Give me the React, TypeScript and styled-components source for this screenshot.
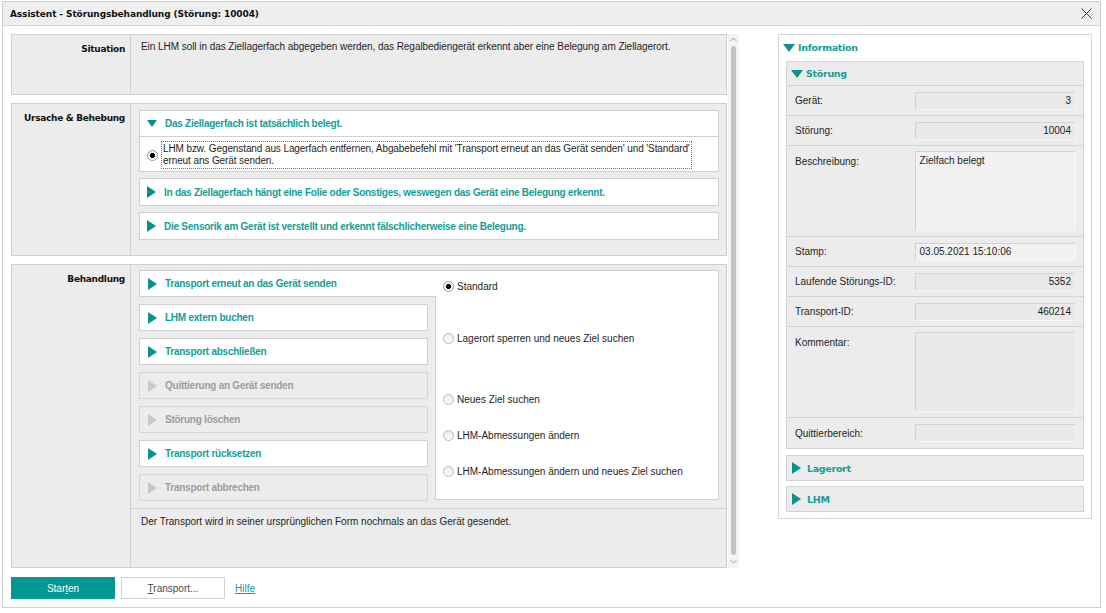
import React from "react";
import styled, { createGlobalStyle, css } from "styled-components";

const teal = "#139e98";
const tealDark = "#0b928d";
const line = "#d0d0d0";
const panelBg = "#ececec";

const GlobalStyle = createGlobalStyle`
  html, body {
    margin: 0;
    padding: 0;
    background: #ffffff;
  }
  body {
    font-family: "Liberation Sans", Arial, sans-serif;
    font-size: 10px;
    color: #1e1e1e;
  }
  * {
    box-sizing: border-box;
  }
`;

const Window = styled.div`
  margin: 1px 0 0 2px;
  width: 1099px;
  height: 607px;
  border: 1px solid #cfcfcf;
  display: flex;
  flex-direction: column;
  background: #ffffff;
`;

const TitleBar = styled.div`
  height: 24px;
  background: #efefef;
  border-bottom: 1px solid #d4d4d4;
  display: flex;
  align-items: center;
  justify-content: space-between;
  padding: 0 8px 0 7px;
`;

const Title = styled.div`
  font-family: "DejaVu Sans", Verdana, sans-serif;
  font-weight: bold;
  font-size: 9px;
  letter-spacing: -0.1px;
  color: #111;
`;

const CloseButton = styled.div`
  width: 12px;
  height: 12px;
  display: flex;
  align-items: center;
  justify-content: center;
`;

const Body = styled.div`
  flex: 1;
  display: flex;
  gap: 39px;
  padding: 8px 0 0 8px;
`;

const LeftColumn = styled.div`
  width: 728px;
  display: flex;
  flex-direction: column;
`;

const ScrollArea = styled.div`
  height: 534px;
  display: flex;
`;

const Sections = styled.div`
  width: 716px;
  display: flex;
  flex-direction: column;
  gap: 8px;
`;

const Section = styled.div<{ $grow?: boolean; $height?: number }>`
  display: flex;
  border: 1px solid ${line};
  background: ${panelBg};
  ${(p) => p.$height && css`height: ${p.$height}px;`}
  ${(p) => p.$grow && css`flex: 1;`}
`;

const SectionLabel = styled.div`
  width: 119px;
  flex-shrink: 0;
  border-right: 1px solid ${line};
  text-align: right;
  padding: 9px 5px 0 0;
  font-family: "DejaVu Sans", Verdana, sans-serif;
  font-weight: bold;
  font-size: 9px;
  letter-spacing: -0.3px;
  color: #111;
`;

const SectionContent = styled.div<{ $pad?: string }>`
  flex: 1;
  min-width: 0;
  display: flex;
  flex-direction: column;
  padding: ${(p) => p.$pad || "0"};
`;

const SituationText = styled.div`
  padding: 6px 10px;
  line-height: 12px;
  letter-spacing: -0.05px;
`;

const ItemList = styled.div`
  display: flex;
  flex-direction: column;
  gap: 6px;
`;

const Item = styled.div`
  background: #fff;
  border: 1px solid ${line};
`;

const ItemHeader = styled.div<{ $open?: boolean }>`
  height: 26px;
  display: flex;
  align-items: center;
  padding-left: 7px;
  gap: 8px;
  ${(p) => p.$open && css`border-bottom: 1px solid ${line};`}
`;

const HeaderText = styled.span<{ $disabled?: boolean }>`
  font-weight: bold;
  font-size: 10px;
  letter-spacing: -0.25px;
  color: ${(p) => (p.$disabled ? "#9c9c9c" : teal)};
`;

const GroupTitle = styled.span`
  font-family: "DejaVu Sans", Verdana, sans-serif;
  font-weight: bold;
  font-size: 9.5px;
  letter-spacing: -0.3px;
  color: ${teal};
`;

const TriangleRight = styled.span<{ $disabled?: boolean }>`
  width: 0;
  height: 0;
  border-top: 6px solid transparent;
  border-bottom: 6px solid transparent;
  border-left: 9px solid ${(p) => (p.$disabled ? "#c9c9c9" : tealDark)};
`;

const TriangleDown = styled.span<{ $size?: number }>`
  width: 0;
  height: 0;
  border-left: ${(p) => (p.$size || 10) / 2}px solid transparent;
  border-right: ${(p) => (p.$size || 10) / 2}px solid transparent;
  border-top: ${(p) => Math.round(((p.$size || 10) * 7) / 10)}px solid ${tealDark};
`;

const OptionRow = styled.div`
  display: flex;
  align-items: center;
  padding: 4px 26px 2px 7px;
  gap: 3px;
`;

const FocusText = styled.div`
  flex: 1;
  min-width: 0;
  overflow: hidden;
  border: 1px dotted #777;
  padding: 1px;
  line-height: 12px;
  white-space: nowrap;
  letter-spacing: -0.1px;
`;

const Radio = styled.span<{ $checked?: boolean }>`
  width: 11px;
  height: 11px;
  flex-shrink: 0;
  border-radius: 50%;
  border: 1px solid ${(p) => (p.$checked ? "#9a9a9a" : "#b9b9b9")};
  background: ${(p) =>
    p.$checked
      ? "radial-gradient(circle, #000 0 2.3px, #f7f7f7 2.8px)"
      : "linear-gradient(#ededed, #fafafa)"};
`;

const TabArea = styled.div`
  display: flex;
  padding: 5px 7px 0 8px;
`;

const ActionList = styled.div`
  width: 289px;
  display: flex;
  flex-direction: column;
  gap: 7px;
`;

const ActionButton = styled.div<{ $selected?: boolean; $disabled?: boolean }>`
  position: relative;
  height: 27px;
  display: flex;
  align-items: center;
  gap: 8px;
  padding-left: 8px;
  background: ${(p) => (p.$disabled ? panelBg : "#fff")};
  border: 1px solid ${(p) => (p.$disabled ? "#d6d6d6" : line)};
  ${(p) =>
    p.$selected &&
    css`
      margin-right: -8px;
      border-right: none;
      z-index: 1;
    `}
`;

const OptionPanel = styled.div`
  flex: 1;
  margin-left: 7px;
  height: 230px;
  background: #fff;
  border: 1px solid ${line};
  display: flex;
  flex-direction: column;
  padding: 8px 0 0 7px;
`;

const RadioOption = styled.div<{ $top: number }>`
  display: flex;
  align-items: center;
  gap: 3px;
  height: 14px;
  margin-top: ${(p) => p.$top}px;
`;

const Description = styled.div`
  margin-top: 7px;
  flex: 1;
  border-top: 1px solid ${line};
  padding: 7px 10px;
`;

const Scrollbar = styled.div`
  width: 12px;
  margin-left: 1px;
  background: #f4f4f4;
  display: flex;
  flex-direction: column;
  align-items: center;
  padding: 3px 0 4px;
`;

const Thumb = styled.div`
  flex: 1;
  width: 5px;
  margin: 4px 0;
  border-radius: 3px;
  background: #c3c3c3;
`;

const Footer = styled.div`
  display: flex;
  align-items: center;
  gap: 6px;
  margin-top: 9px;
`;

const Button = styled.div<{ $primary?: boolean }>`
  width: 104px;
  height: 22px;
  display: flex;
  align-items: center;
  justify-content: center;
  font-size: 10px;
  color: ${(p) => (p.$primary ? "#fff" : "#4a4a4a")};
  background: ${(p) => (p.$primary ? "#009893" : "#fff")};
  border: 1px solid ${(p) => (p.$primary ? "#009893" : "#d2d2d2")};
  u {
    text-decoration-thickness: 1px;
  }
`;

const Link = styled.a`
  margin-left: 4px;
  color: ${teal};
  text-decoration: underline;
  font-size: 10px;
`;

/* right-hand info panel */

const InfoPanel = styled.div`
  width: 314px;
  height: 485px;
  border: 1px solid #d8d8d8;
  padding: 0 7px;
  display: flex;
  flex-direction: column;
`;

const InfoHeader = styled.div`
  height: 26px;
  display: flex;
  align-items: center;
  gap: 3px;
  margin-left: -3px;
  padding-bottom: 1px;
`;

const InfoGroup = styled.div<{ $gap?: number }>`
  border: 1px solid #d4d4d4;
  background: ${panelBg};
  margin-top: ${(p) => p.$gap ?? 0}px;
`;

const GroupHeader = styled.div<{ $open?: boolean }>`
  height: 24px;
  display: flex;
  align-items: center;
  gap: ${(p) => (p.$open ? 3 : 6)}px;
  padding-left: ${(p) => (p.$open ? 4 : 5)}px;
  ${(p) => p.$open && css`border-bottom: 1px solid #d4d4d4;`}
`;

const FieldRow = styled.div<{ $tall?: boolean; $last?: boolean }>`
  display: flex;
  align-items: ${(p) => (p.$tall ? "flex-start" : "center")};
  height: ${(p) => (p.$tall ? 91 : 30)}px;
  padding: ${(p) => (p.$tall ? "5px 7px 0 8px" : "0 7px 0 8px")};
  ${(p) => !p.$last && css`border-bottom: 1px solid #d4d4d4;`}
`;

const FieldLabel = styled.div<{ $tall?: boolean }>`
  width: 120px;
  padding-top: ${(p) => (p.$tall ? 5 : 0)}px;
`;

const Field = styled.div<{ $tall?: boolean; $light?: boolean; $right?: boolean }>`
  width: 162px;
  height: ${(p) => (p.$tall ? 80 : 18)}px;
  border: 1px solid;
  border-color: #d3d3d3 #f7f7f7 #f7f7f7 #d3d3d3;
  background: ${(p) => (p.$light ? "#f1f1f1" : "#e9e9e9")};
  display: flex;
  align-items: ${(p) => (p.$tall ? "flex-start" : "center")};
  justify-content: ${(p) => (p.$right ? "flex-end" : "flex-start")};
  padding: ${(p) => (p.$tall ? "3px 4px" : "0 4px")};
`;

const fields: { label: string; value?: string; tall?: boolean; light?: boolean; right?: boolean }[] = [
  { label: "Gerät:", value: "3", right: true },
  { label: "Störung:", value: "10004", right: true },
  { label: "Beschreibung:", value: "Zielfach belegt", tall: true, light: true },
  { label: "Stamp:", value: "03.05.2021 15:10:06", light: true },
  { label: "Laufende Störungs-ID:", value: "5352", right: true },
  { label: "Transport-ID:", value: "460214", right: true },
  { label: "Kommentar:", tall: true },
  { label: "Quittierbereich:" },
];

const actions: { label: string; disabled?: boolean }[] = [
  { label: "Transport erneut an das Gerät senden" },
  { label: "LHM extern buchen" },
  { label: "Transport abschließen" },
  { label: "Quittierung an Gerät senden", disabled: true },
  { label: "Störung löschen", disabled: true },
  { label: "Transport rücksetzen" },
  { label: "Transport abbrechen", disabled: true },
];

const radioOptions = [
  { label: "Standard", top: 0, checked: true },
  { label: "Lagerort sperren und neues Ziel suchen", top: 38 },
  { label: "Neues Ziel suchen", top: 47 },
  { label: "LHM-Abmessungen ändern", top: 22 },
  { label: "LHM-Abmessungen ändern und neues Ziel suchen", top: 22 },
];

const Chevron = ({ up }: { up?: boolean }) => (
  <svg width="7" height="5" viewBox="0 0 7 5">
    <path
      d={up ? "M0.5 4 L3.5 1 L6.5 4" : "M0.5 1 L3.5 4 L6.5 1"}
      stroke="#9a9a9a"
      strokeWidth="1"
      fill="none"
    />
  </svg>
);

export default function App() {
  return (
    <>
      <GlobalStyle />
      <Window>
        <TitleBar>
          <Title>Assistent - Störungsbehandlung (Störung: 10004)</Title>
          <CloseButton>
            <svg width="11" height="11" viewBox="0 0 11 11">
              <path d="M0.5 0.5 L10.5 10.5 M10.5 0.5 L0.5 10.5" stroke="#333" strokeWidth="1" />
            </svg>
          </CloseButton>
        </TitleBar>
        <Body>
          <LeftColumn>
            <ScrollArea>
              <Sections>
                <Section $height={61}>
                  <SectionLabel>Situation</SectionLabel>
                  <SectionContent>
                    <SituationText>
                      Ein LHM soll in das Ziellagerfach abgegeben werden, das Regalbediengerät erkennt aber eine
                      Belegung am Ziellagerort.
                    </SituationText>
                  </SectionContent>
                </Section>

                <Section>
                  <SectionLabel>Ursache &amp; Behebung</SectionLabel>
                  <SectionContent $pad="6px 7px 15px 8px">
                    <ItemList>
                      <Item>
                        <ItemHeader $open>
                          <TriangleDown />
                          <HeaderText>Das Ziellagerfach ist tatsächlich belegt.</HeaderText>
                        </ItemHeader>
                        <OptionRow>
                          <Radio $checked />
                          <FocusText>
                            LHM bzw. Gegenstand aus Lagerfach entfernen, Abgabebefehl mit 'Transport erneut an das
                            Gerät senden' und 'Standard'
                            <br />
                            erneut ans Gerät senden.
                          </FocusText>
                        </OptionRow>
                      </Item>
                      <Item>
                        <ItemHeader>
                          <TriangleRight />
                          <HeaderText>
                            In das Ziellagerfach hängt eine Folie oder Sonstiges, weswegen das Gerät eine Belegung
                            erkennt.
                          </HeaderText>
                        </ItemHeader>
                      </Item>
                      <Item>
                        <ItemHeader>
                          <TriangleRight />
                          <HeaderText>
                            Die Sensorik am Gerät ist verstellt und erkennt fälschlicherweise eine Belegung.
                          </HeaderText>
                        </ItemHeader>
                      </Item>
                    </ItemList>
                  </SectionContent>
                </Section>

                <Section $grow>
                  <SectionLabel>Behandlung</SectionLabel>
                  <SectionContent>
                    <TabArea>
                      <ActionList>
                        {actions.map((a, i) => (
                          <ActionButton key={a.label} $selected={i === 0} $disabled={a.disabled}>
                            <TriangleRight $disabled={a.disabled} />
                            <HeaderText $disabled={a.disabled}>{a.label}</HeaderText>
                          </ActionButton>
                        ))}
                      </ActionList>
                      <OptionPanel>
                        {radioOptions.map((o) => (
                          <RadioOption key={o.label} $top={o.top}>
                            <Radio $checked={o.checked} />
                            <span>{o.label}</span>
                          </RadioOption>
                        ))}
                      </OptionPanel>
                    </TabArea>
                    <Description>
                      Der Transport wird in seiner ursprünglichen Form nochmals an das Gerät gesendet.
                    </Description>
                  </SectionContent>
                </Section>
              </Sections>
              <Scrollbar>
                <Chevron up />
                <Thumb />
                <Chevron />
              </Scrollbar>
            </ScrollArea>
            <Footer>
              <Button $primary>
                Star<u>t</u>en
              </Button>
              <Button>
                <span>
                  <u>T</u>ransport...
                </span>
              </Button>
              <Link href="#">Hilfe</Link>
            </Footer>
          </LeftColumn>

          <InfoPanel>
            <InfoHeader>
              <TriangleDown $size={12} />
              <GroupTitle>Information</GroupTitle>
            </InfoHeader>
            <InfoGroup>
              <GroupHeader $open>
                <TriangleDown $size={12} />
                <GroupTitle>Störung</GroupTitle>
              </GroupHeader>
              {fields.map((f, i) => (
                <FieldRow key={f.label} $tall={f.tall} $last={i === fields.length - 1}>
                  <FieldLabel $tall={f.tall}>{f.label}</FieldLabel>
                  <Field $tall={f.tall} $light={f.light} $right={f.right}>
                    {f.value}
                  </Field>
                </FieldRow>
              ))}
            </InfoGroup>
            <InfoGroup $gap={6}>
              <GroupHeader>
                <TriangleRight />
                <GroupTitle>Lagerort</GroupTitle>
              </GroupHeader>
            </InfoGroup>
            <InfoGroup $gap={5}>
              <GroupHeader>
                <TriangleRight />
                <GroupTitle>LHM</GroupTitle>
              </GroupHeader>
            </InfoGroup>
          </InfoPanel>
        </Body>
      </Window>
    </>
  );
}
